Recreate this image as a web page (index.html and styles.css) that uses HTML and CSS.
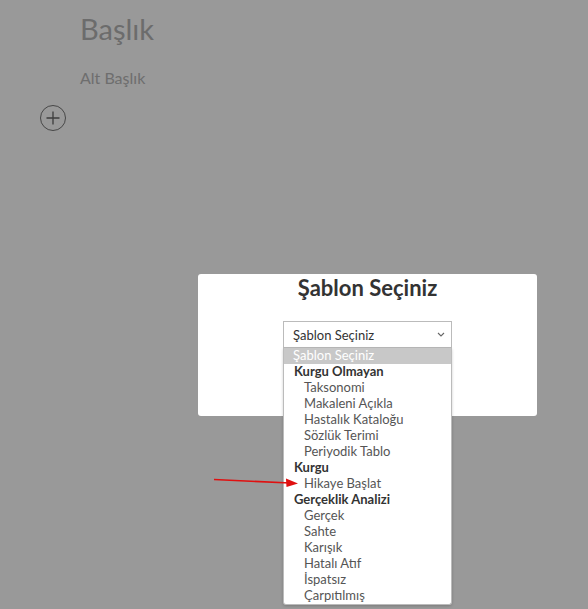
FILE: index.html
```html
<!DOCTYPE html>
<html lang="tr">

<head>
    <meta charset="UTF-8">
    <link rel="stylesheet" href="styles.css">
    <title>Şablon</title>
</head>

<body>
    <div id="page">
        <h1 class="doc-title">Başlık</h1>
        <p class="doc-subtitle">Alt Başlık</p>
        <button class="add-btn" type="button">
            <svg width="28" height="28" viewBox="0 0 28 28">
                <circle cx="14" cy="14" r="12.5" fill="none" stroke="#777" stroke-width="1"/>
                <path d="M14 7.5v13M7.5 14h13" stroke="#666" stroke-width="1.3"/>
            </svg>
        </button>
    </div>

    <div class="overlay">
        <div class="modal">
            <h2 class="modal-title">Şablon Seçiniz</h2>
            <div class="select-wrap">
                <div class="select-box">
                    <span>Şablon Seçiniz</span>
                    <svg width="8" height="5" viewBox="0 0 8 5"><path d="M1 1l3 3 3-3" fill="none" stroke="#666" stroke-width="1.1"/></svg>
                </div>
                <ul class="select-list">
                    <li class="opt selected">Şablon Seçiniz</li>
                    <li class="group">Kurgu Olmayan</li>
                    <li class="opt">Taksonomi</li>
                    <li class="opt">Makaleni Açıkla</li>
                    <li class="opt">Hastalık Kataloğu</li>
                    <li class="opt">Sözlük Terimi</li>
                    <li class="opt">Periyodik Tablo</li>
                    <li class="group">Kurgu</li>
                    <li class="opt">Hikaye Başlat</li>
                    <li class="group">Gerçeklik Analizi</li>
                    <li class="opt">Gerçek</li>
                    <li class="opt">Sahte</li>
                    <li class="opt">Karışık</li>
                    <li class="opt">Hatalı Atıf</li>
                    <li class="opt">İspatsız</li>
                    <li class="opt">Çarpıtılmış</li>
                </ul>
            </div>
        </div>
    </div>

    <svg class="pointer" width="100" height="14" viewBox="0 0 100 14">
        <path d="M2 5.5L78 9" stroke="#e01010" stroke-width="1.6"/>
        <path d="M86 9.5L74 4.5L74.5 13Z" fill="#e01010"/>
    </svg>
</body>

</html>
```

FILE: styles.css
```css
@charset "UTF-8";

/* ========BASIC======== */
html,
body {
    margin: 0;
    padding: 0;
    height: 100%;
}

body {
    font-family: Lato, "Open Sans", sans-serif;
    color: #333;
    background: #fff;
    position: relative;
}

/* ========PAGE======== */
#page {
    padding: 11px 0 0 80px;
}

.doc-title {
    margin: 0;
    font-size: 29px;
    font-weight: 400;
    line-height: 36px;
    color: #b4b4b4;
}

.doc-subtitle {
    margin: 21px 0 0 0;
    font-size: 16px;
    line-height: 20px;
    color: #b8b8b8;
}

.add-btn {
    margin: 16px 0 0 -41px;
    padding: 0;
    border: 0;
    background: none;
    display: block;
}

/* ========MODAL======== */
.overlay {
    position: absolute;
    inset: 0;
    background: rgba(0, 0, 0, 0.4);
}

.modal {
    position: absolute;
    left: 198px;
    top: 274px;
    width: 339px;
    height: 142px;
    background: #fff;
    border-radius: 3px;
    text-align: center;
}

.modal-title {
    margin: 0;
    font-size: 22px;
    font-weight: 700;
    line-height: 28px;
    color: #333;
}

.select-wrap {
    position: relative;
    width: 169px;
    margin: 19px auto 0;
    text-align: left;
}

.select-box {
    height: 25px;
    border: 1px solid #bbb;
    padding: 0 6px 0 9px;
    display: flex;
    align-items: center;
    justify-content: space-between;
    font-size: 13px;
    color: #333;
    background: #fff;
}

.select-list {
    position: absolute;
    top: 27px;
    left: 0;
    right: 0;
    margin: 0;
    padding: 0;
    list-style: none;
    background: #fff;
    border: 1px solid #bbb;
    border-top: 0;
    border-radius: 0 0 3px 3px;
    box-shadow: 0 1px 3px rgba(0, 0, 0, 0.2);
}

.select-list li {
    height: 16px;
    line-height: 15px;
    font-size: 13px;
    white-space: nowrap;
}

.select-list .group {
    padding-left: 10px;
    font-weight: 700;
    color: #333;
}

.select-list .opt {
    padding-left: 20px;
    color: #555;
}

.select-list .selected {
    padding-left: 9px;
    background: #c8c8c8;
    color: #fff;
}

.pointer {
    position: absolute;
    left: 212px;
    top: 474px;
}
```
